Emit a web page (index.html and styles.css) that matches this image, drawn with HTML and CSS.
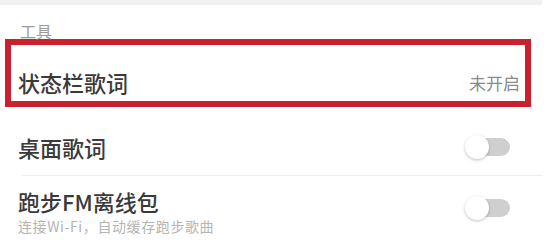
FILE: index.html
```html
<!DOCTYPE html>
<html lang="zh-CN">
<head>
<meta charset="utf-8">
<link rel="stylesheet" href="styles.css">
</head>
<body>
<div class="page">
  <div class="top-band"></div>
  <div class="section-title">工具</div>
  <div class="highlight">
    <div class="row-hl">
      <span class="title">状态栏歌词</span>
      <span class="value">未开启</span>
    </div>
  </div>
  <div class="row row-one">
    <span class="title">桌面歌词</span>
    <span class="toggle"></span>
  </div>
  <div class="divider"></div>
  <div class="row row-two">
    <div class="texts">
      <div class="title">跑步FM离线包</div>
      <div class="sub">连接Wi-Fi，自动缓存跑步歌曲</div>
    </div>
    <span class="toggle toggle-two"></span>
  </div>
</div>
</body>
</html>
```

FILE: styles.css
```css
html, body {
  margin: 0;
  padding: 0;
  background: #ffffff;
}
.page {
  width: 550px;
  height: 239px;
  overflow: hidden;
  font-family: "Noto Sans CJK SC", "Noto Sans", sans-serif;
}
.top-band {
  height: 5px;
  width: 542px;
  background: #f1f1f1;
}
.section-title {
  padding: 17px 0 0 20px;
  height: 17px;
  line-height: 18px;
  font-size: 16px;
  color: #9a9a9a;
}
.highlight {
  margin: 0 19px 0 5px;
  border: 6px solid #c9212d;
  height: 56px;
  box-sizing: content-box;
}
.row-hl {
  display: flex;
  justify-content: space-between;
  align-items: center;
  padding: 24px 5px 0 7px;
  height: 26px;
}
.title {
  font-size: 22px;
  line-height: 26px;
  font-weight: 500;
  color: #3a3a3a;
}
.value {
  font-size: 17px;
  color: #8a8a8a;
}
.row {
  display: flex;
  justify-content: space-between;
  align-items: center;
  padding-left: 18px;
  padding-right: 40px;
}
.row-one {
  height: 56px;
  padding-top: 12px;
}
.divider {
  height: 1px;
  background: #eeeeee;
  margin: 0 7px 0 22px;
}
.row-two {
  padding-top: 12px;
}
.sub {
  margin-top: 4px;
  font-size: 14px;
  line-height: 16px;
  letter-spacing: 0.6px;
  color: #b4b4b4;
}
.toggle {
  position: relative;
  width: 38px;
  height: 18px;
  border-radius: 9px;
  background: #cfcfcf;
}
.toggle-two {
  margin-bottom: 6px;
}
.toggle::before {
  content: "";
  position: absolute;
  left: -7px;
  top: -3px;
  width: 24px;
  height: 24px;
  border-radius: 50%;
  background: #ffffff;
  box-shadow: 0 1px 3px rgba(0, 0, 0, 0.25);
}
```
